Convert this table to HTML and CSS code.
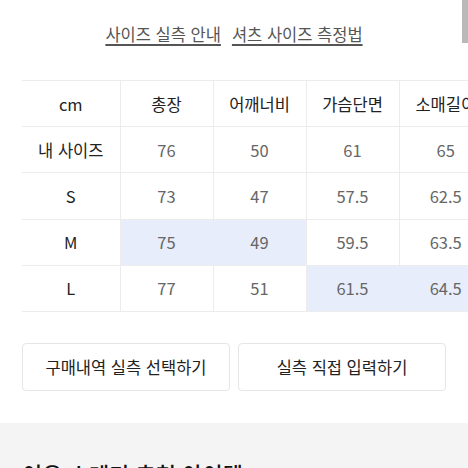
FILE: index.html
```html
<!DOCTYPE html>
<html lang="ko">
<head>
<meta charset="utf-8">
<link rel="stylesheet" href="styles.css">
</head>
<body>
<div class="page">
  <div class="scrollbar"></div>
  <nav class="links">
    <a class="link" href="#">사이즈 실측 안내</a>
    <a class="link" href="#">셔츠 사이즈 측정법</a>
  </nav>
  <div class="table-wrap">
    <table class="size-table">
      <colgroup>
        <col class="c-first"><col class="c"><col class="c"><col class="c"><col class="c">
      </colgroup>
      <thead>
        <tr><th>cm</th><th>총장</th><th>어깨너비</th><th>가슴단면</th><th>소매길이</th></tr>
      </thead>
      <tbody>
        <tr><th>내 사이즈</th><td>76</td><td>50</td><td>61</td><td>65</td></tr>
        <tr><th>S</th><td>73</td><td>47</td><td>57.5</td><td>62.5</td></tr>
        <tr><th>M</th><td class="hl">75</td><td class="hl">49</td><td>59.5</td><td>63.5</td></tr>
        <tr><th>L</th><td>77</td><td>51</td><td class="hl">61.5</td><td class="hl">64.5</td></tr>
      </tbody>
    </table>
  </div>
  <div class="buttons">
    <button class="btn">구매내역 실측 선택하기</button>
    <button class="btn">실측 직접 입력하기</button>
  </div>
  <section class="rec">
    <h2 class="rec-title">이유 스테디 추천 아이템</h2>
    <span class="rec-more">전체보기</span>
  </section>
</div>
</body>
</html>
```
FILE: styles.css
```css
* { box-sizing: border-box; }
html, body { margin: 0; padding: 0; background: #fff; }
body {
  font-family: "Noto Sans CJK KR", "Noto Sans", sans-serif;
  color: #222;
  width: 468px;
  height: 468px;
  overflow: hidden;
}
.page { position: relative; width: 468px; height: 468px; overflow: hidden; }
.scrollbar {
  position: absolute;
  top: 0;
  right: 0;
  width: 6px;
  height: 43px;
  background: #b9b9b9;
}
.links {
  display: flex;
  justify-content: center;
  gap: 11px;
  padding-top: 22px;
  height: 80px;
}
.link {
  font-size: 16.5px;
  line-height: 24px;
  color: #555;
  text-decoration: underline;
  text-decoration-thickness: 1.5px;
  text-underline-offset: 3px;
}
.table-wrap {
  padding-left: 22px;
  overflow: hidden;
  width: 468px;
}
.size-table {
  border-collapse: collapse;
  table-layout: fixed;
  width: 470px;
}
.c-first { width: 98px; }
.c { width: 93px; }
.size-table th, .size-table td {
  height: 46.2px;
  padding: 0;
  text-align: center;
  font-size: 16.5px;
  font-weight: 400;
  border-top: 1px solid #ececec;
  border-bottom: 1px solid #ececec;
  white-space: nowrap;
  overflow: hidden;
}
.size-table th { color: #222; }
.size-table td { color: #666; border-left: 1px solid #ececec; }
.size-table thead th + th { border-left: 1px solid #ececec; }
.size-table td.hl { background: #e8edfb; }
.buttons {
  display: flex;
  gap: 8px;
  padding: 0 22px;
  margin-top: 31px;
}
.btn {
  flex: 0 0 208px;
  height: 48px;
  background: #fff;
  border: 1px solid #e6e6e6;
  border-radius: 4px;
  font-family: inherit;
  font-size: 16.5px;
  color: #222;
}
.rec {
  margin-top: 32px;
  background: #f4f4f4;
  height: 45px;
  overflow: hidden;
  padding: 35px 22px 0;
  display: flex;
  justify-content: space-between;
  align-items: flex-start;
}
.rec-title {
  margin: 0;
  font-size: 22px;
  font-weight: 500;
  line-height: 30px;
  color: #111;
}
.rec-more {
  font-size: 13px;
  color: #888;
  line-height: 30px;
  padding-top: 4px;
}
```
